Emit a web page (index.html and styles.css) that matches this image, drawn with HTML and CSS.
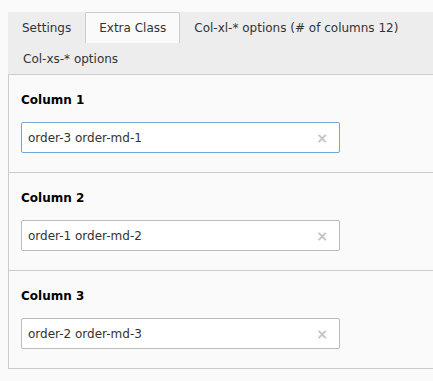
FILE: index.html
```html
<!DOCTYPE html>
<html>
<head>
<meta charset="utf-8">
<link rel="stylesheet" href="styles.css">
</head>
<body>
<div class="wrap">
  <div class="tabs">
    <div class="tab">Settings</div>
    <div class="tab active">Extra Class</div>
    <div class="tab">Col-xl-* options (# of columns 12)</div>
    <div class="tab tab-second">Col-xs-* options</div>
  </div>
  <div class="panel">
    <div class="section">
      <div class="label">Column 1</div>
      <div class="field focused"><span class="value">order-3 order-md-1</span><span class="clear">×</span></div>
    </div>
    <div class="section">
      <div class="label">Column 2</div>
      <div class="field"><span class="value">order-1 order-md-2</span><span class="clear">×</span></div>
    </div>
    <div class="section">
      <div class="label">Column 3</div>
      <div class="field"><span class="value">order-2 order-md-3</span><span class="clear">×</span></div>
    </div>
  </div>
</div>
</body>
</html>
```
FILE: styles.css
```css
html, body {
  margin: 0;
  padding: 0;
  background: #fafafa;
  overflow: hidden;
}
body {
  font-family: "DejaVu Sans", Verdana, sans-serif;
  font-size: 12px;
  color: #333;
}
.wrap {
  margin: 12px 0 0 8px;
  width: 440px;
}
.tabs {
  display: flex;
  flex-wrap: wrap;
  background: #ededed;
  border-bottom: 1px solid #ccc;
}
.tab {
  border: 1px solid transparent;
  border-bottom: 0;
  padding: 7px 13px 6px;
  line-height: 17px;
  white-space: nowrap;
  color: #333;
}
.tab-second {
  padding-left: 14px;
}
.tab.active {
  background: #fafafa;
  border-color: #ccc;
  border-radius: 2px 2px 0 0;
}
.panel {
  border-left: 1px solid #ccc;
  background: #fafafa;
}
.section {
  padding: 18px 0 19px 12px;
  border-bottom: 1px solid #ccc;
}
.label {
  font-weight: bold;
  color: #000;
  line-height: 14px;
  margin-bottom: 15px;
}
.field {
  box-sizing: border-box;
  width: 319px;
  height: 31px;
  display: flex;
  align-items: center;
  justify-content: space-between;
  background: #fff;
  border: 1px solid #bbb;
  border-radius: 2px;
  padding: 0 11px 0 6px;
}
.field.focused {
  border-color: #6ea7db;
}
.value {
  color: #333;
}
.clear {
  color: #c4c4c4;
  font-size: 14px;
  font-weight: bold;
}
```
